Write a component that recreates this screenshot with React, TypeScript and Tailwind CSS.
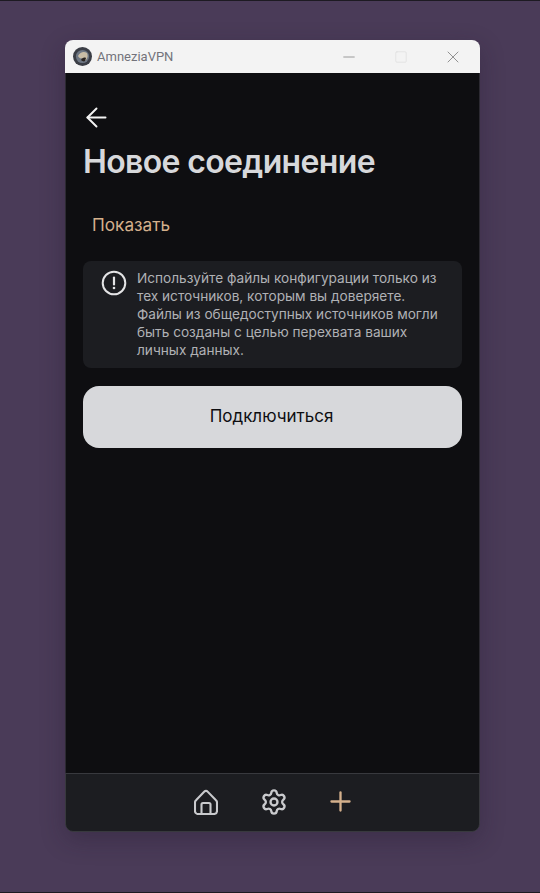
import React from 'react';
import { ArrowLeft, Minus, Plus, Settings, Square, X } from 'lucide-react';

const warning = [
    'Используйте файлы конфигурации только из',
    'тех источников, которым вы доверяете.',
    'Файлы из общедоступных источников могли',
    'быть созданы с целью перехвата ваших',
    'личных данных.',
];

const AppLogo = () => (
    <svg width="19" height="19" viewBox="0 0 19 19" className="shrink-0">
        <circle cx="9.5" cy="9.5" r="9.5" fill="#3a3d45" />
        <circle cx="9.5" cy="9.5" r="6.6" fill="#6d7683" />
        <path d="M5 9c2-4 6-5 9-3 1 2 1 5-1 7-2 1-3-1-4-2-1 1-3 0-4-2z" fill="#c9bda6" />
        <path d="M8 13c1-2 3-3 5-2l-1 3c-1 1-3 0-4-1z" fill="#2a2420" />
    </svg>
);

const HomeIcon = () => (
    <svg width="24" height="26" viewBox="0 0 24 26" fill="none" stroke="#c9cacd" strokeWidth="2.1" strokeLinejoin="round">
        <path d="M2 11.2 10.4 2.6a2.2 2.2 0 0 1 3.2 0L22 11.2a3 3 0 0 1 1 2.2V22a3 3 0 0 1-3 3H4a3 3 0 0 1-3-3v-8.6a3 3 0 0 1 1-2.2z" />
        <path d="M7.5 25V15.5a1.5 1.5 0 0 1 1.5-1.5h6a1.5 1.5 0 0 1 1.5 1.5V25" />
    </svg>
);

export default function App() {
    return (
        <div className="h-[893px] w-[540px] overflow-hidden border-y border-[#1d1a22] bg-[#4a3b58] pl-[65px] pt-[39px] font-['Inter',sans-serif]">
            <div className="flex h-[792px] w-[415px] flex-col overflow-hidden rounded-[8px] shadow-[0_8px_24px_rgba(30,20,40,0.3)]">
                <div className="flex h-[33px] shrink-0 items-center bg-[#f3f3f3] pl-[8px]">
                    <AppLogo />
                    <span className="ml-[5px] font-['Roboto',sans-serif] text-[13px] text-[#73737b]">AmneziaVPN</span>
                    <div className="ml-auto flex items-center text-[#6f6f6f]">
                        <Minus size={18} strokeWidth={0.9} className="mr-[36px]" />
                        <Square size={14} strokeWidth={1} className="mr-[35px] text-[#dadada]" />
                        <X size={20} strokeWidth={0.9} className="mr-[17px]" />
                    </div>
                </div>

                <main className="flex flex-1 flex-col border-x border-[#2c2a32] bg-[#0e0e11] px-[17px]">
                    <ArrowLeft size={31} strokeWidth={1.5} className="ml-[-2px] mt-[29px] text-[#f3f3f3]" />
                    <h1 className="mt-[9px] text-[32px] font-semibold leading-[40px] tracking-[-0.65px] text-[#d7d8db]">Новое соединение</h1>
                    <button className="ml-[9px] mt-[31px] self-start text-[17.2px] leading-[24px] text-[#d4b08c]">Показать</button>

                    <div className="mt-[24px] flex rounded-[8px] bg-[#1c1d21] pb-[9px] pl-[18px] pt-[8px]">
                        <svg width="26" height="26" viewBox="0 0 26 26" fill="none" className="mt-[1px] shrink-0">
                            <circle cx="13" cy="13" r="11.3" stroke="#e4e4e6" strokeWidth="2" />
                            <path d="M13 7.5v7" stroke="#e4e4e6" strokeWidth="2.2" strokeLinecap="round" />
                            <circle cx="13" cy="18" r="1.3" fill="#e4e4e6" />
                        </svg>
                        <p className="ml-[10px] text-[13.65px] leading-[18px] text-[#b0b1b5]">
                            {warning.map((line) => (
                                <span key={line} className="block whitespace-nowrap">{line}</span>
                            ))}
                        </p>
                    </div>

                    <button className="mt-[18px] h-[62px] rounded-[16px] bg-[#d7d8db] pr-[2px] text-[17px] text-[#0e0e11]">Подключиться</button>
                </main>

                <nav className="flex h-[59px] shrink-0 items-center justify-center gap-[36px] rounded-b-[8px] border border-[#38393e] bg-[#1c1d21] pb-[2px] pl-[2px]">
                    <div className="flex w-[32px] justify-center"><HomeIcon /></div>
                    <div className="flex w-[32px] justify-center"><Settings size={28} strokeWidth={2} className="text-[#c9cacd]" /></div>
                    <div className="flex w-[32px] justify-center"><Plus size={31} strokeWidth={1.8} className="ml-[-2px] text-[#d4b08c]" /></div>
                </nav>
            </div>
        </div>
    );
}
